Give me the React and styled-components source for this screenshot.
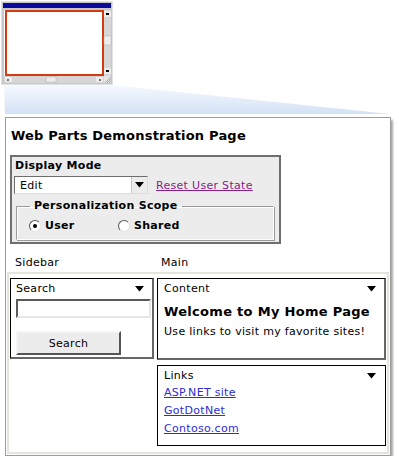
import React from "react";
import styled, { createGlobalStyle } from "styled-components";

const GlobalStyle = createGlobalStyle`
  html, body {
    margin: 0;
    padding: 0;
    background: #ffffff;
  }
  body {
    font-family: "DejaVu Sans", Verdana, sans-serif;
    font-size: 11px;
    letter-spacing: 0.3px;
    color: #000000;
  }
`;

function Illustration() {
  return (
    <svg width="399" height="114" viewBox="0 0 399 114">
      <defs>
        <linearGradient id="zoomFade" x1="0" y1="0" x2="0" y2="1">
          <stop offset="0" stopColor="#f6f9fe" />
          <stop offset="1" stopColor="#d3e1f5" />
        </linearGradient>
      </defs>
      <polygon points="4,85 112,85 390,114 5,114" fill="url(#zoomFade)" />
      {/* window frame */}
      <rect x="1" y="1" width="112" height="84" fill="#c8c8c8" />
      <rect x="1.5" y="1.5" width="111" height="83" fill="none" stroke="#e2e2e2" />
      <rect x="3" y="3" width="108" height="5" fill="#0a0a9c" />
      {/* client area */}
      <rect x="4" y="10" width="100" height="66" fill="#ffffff" />
      <rect x="6" y="11" width="97" height="64" fill="none" stroke="#d23a10" strokeWidth="2" />
      {/* vertical scrollbar */}
      <rect x="104" y="10" width="7" height="66" fill="#d6d6d6" />
      <rect x="104" y="11" width="7" height="6" fill="#ececec" />
      <rect x="106" y="13" width="3" height="2" fill="#000" />
      <rect x="104" y="36" width="7" height="9" fill="#ececec" stroke="#b0b0b0" strokeWidth="0.5" />
      <rect x="104" y="68" width="7" height="6" fill="#ececec" />
      <rect x="106" y="70" width="3" height="2" fill="#000" />
      {/* horizontal scrollbar */}
      <rect x="4" y="76" width="100" height="7" fill="#d6d6d6" />
      <rect x="5" y="77" width="7" height="5" fill="#ececec" />
      <rect x="7" y="79" width="2" height="2" fill="#777" />
      <rect x="46" y="77" width="10" height="5" fill="#ececec" stroke="#b0b0b0" strokeWidth="0.5" />
      <rect x="96" y="77" width="7" height="5" fill="#ececec" />
      <rect x="99" y="79" width="2" height="2" fill="#777" />
      {/* resize grip */}
      <rect x="104" y="76" width="7" height="7" fill="#e4e4e4" />
      <path d="M105 83 L111 77 M107 83 L111 79 M109 83 L111 81" stroke="#999" strokeWidth="0.8" />
    </svg>
  );
}

function Arrow() {
  return (
    <svg width="9" height="6" viewBox="0 0 9 6">
      <polygon points="0,0 9,0 4.5,5.5" fill="#000" />
    </svg>
  );
}

export default function App() {
  return (
    <>
      <GlobalStyle />
      <Illustration />
      <Panel>
        <PageTitle>Web Parts Demonstration Page</PageTitle>
        <ModeBox>
          <BoldLabel>Display Mode</BoldLabel>
          <ModeRow>
            <Select>
              <span>Edit</span>
              <SelectButton>
                <Arrow />
              </SelectButton>
            </Select>
            <ResetLink href="#">Reset User State</ResetLink>
          </ModeRow>
          <Scope>
            <Legend>Personalization Scope</Legend>
            <RadioRow>
              <RadioItem $width={89}>
                <Radio $checked />
                User
              </RadioItem>
              <RadioItem>
                <Radio />
                Shared
              </RadioItem>
            </RadioRow>
          </Scope>
        </ModeBox>

        <ZoneHeads>
          <ZoneHead>Sidebar</ZoneHead>
          <ZoneHead>Main</ZoneHead>
        </ZoneHeads>
        <Zones>
          <Column>
            <Part $height={81}>
              <PartTitle>
                Search
                <Arrow />
              </PartTitle>
              <TextBox />
              <Button>Search</Button>
            </Part>
          </Column>
          <Column>
            <Part $height={82} $wide>
              <PartTitle>
                Content
                <Arrow />
              </PartTitle>
              <Heading>Welcome to My Home Page</Heading>
              <Body>Use links to visit my favorite sites!</Body>
            </Part>
            <Part $height={81} $wide $thin>
              <PartTitle>
                Links
                <Arrow />
              </PartTitle>
              <LinkItem href="#">ASP.NET site</LinkItem>
              <LinkItem href="#">GotDotNet</LinkItem>
              <LinkItem href="#">Contoso.com</LinkItem>
            </Part>
          </Column>
        </Zones>
      </Panel>
    </>
  );
}

const Panel = styled.div`
  margin-left: 5px;
  width: 384px;
  height: 337px;
  border: 1px solid #9c9c9c;
  box-shadow: 2px 3px 2px rgba(0, 0, 0, 0.35);
  background: #ffffff;
  box-sizing: content-box;
  display: flex;
  flex-direction: column;
`;

const PageTitle = styled.div`
  padding: 10px 0 0 5px;
  font-size: 13px;
  line-height: 16px;
  font-weight: bold;
  letter-spacing: 0.2px;
`;

const ModeBox = styled.div`
  margin: 11px 0 0 4px;
  width: 265px;
  height: 84px;
  border: 2px solid #6e6e6e;
  background: #ececec;
  padding: 1px 0 0 2px;
  box-sizing: content-box;
  display: flex;
  flex-direction: column;
`;

const BoldLabel = styled.div`
  font-weight: bold;
  line-height: 14px;
  padding-left: 1px;
  margin-top: 1px;
`;

const ModeRow = styled.div`
  display: flex;
  align-items: center;
  gap: 8px;
  margin-top: 3px;
`;

const Select = styled.div`
  width: 134px;
  height: 18px;
  box-sizing: border-box;
  border: 1px solid;
  border-color: #6e6e6e #dcdcdc #dcdcdc #6e6e6e;
  background: #ffffff;
  display: flex;
  align-items: center;
  justify-content: space-between;
  padding-left: 5px;
`;

const SelectButton = styled.div`
  width: 15px;
  height: 16px;
  background: #ececec;
  border-left: 1px solid #c8c8c8;
  display: flex;
  align-items: center;
  justify-content: center;
`;

const ResetLink = styled.a`
  color: #8b1c8b;
  text-decoration: underline;
  margin-top: 1px;
`;

const Scope = styled.fieldset`
  flex: none;
  margin: 6px 5px 0 2px;
  padding: 2px 0 0 12px;
  height: 40px;
  box-sizing: border-box;
  border: 1px solid #9a9a9a;
  border-right-color: #ffffff;
  border-bottom-color: #ffffff;
  box-shadow: 1px 1px 0 #9a9a9a, inset 1px 1px 0 #ffffff;
`;

const Legend = styled.legend`
  font-weight: bold;
  padding: 0 4px;
  margin-left: 1px;
  line-height: 12px;
`;

const RadioRow = styled.div`
  display: flex;
  align-items: center;
  margin-top: 5px;
`;

const RadioItem = styled.label`
  display: flex;
  align-items: center;
  gap: 4px;
  font-weight: bold;
  width: ${(p) => (p.$width ? `${p.$width}px` : "auto")};
`;

const Radio = styled.span`
  width: 12px;
  height: 12px;
  box-sizing: border-box;
  border-radius: 50%;
  border: 1px solid;
  border-color: #555 #e4e4e4 #e4e4e4 #555;
  background: #ffffff;
  display: flex;
  align-items: center;
  justify-content: center;
  &::after {
    content: "";
    width: 4px;
    height: 4px;
    border-radius: 50%;
    background: #000;
    display: ${(p) => (p.$checked ? "block" : "none")};
  }
`;

const ZoneHeads = styled.div`
  display: grid;
  grid-template-columns: 146px 1fr;
  margin-top: 11px;
  padding-bottom: 1px;
`;

const ZoneHead = styled.div`
  padding-left: 9px;
  line-height: 16px;
`;

const Zones = styled.div`
  flex: 1;
  margin: 0 1px 1px 1px;
  border: 2px solid #e4e4da;
  display: grid;
  grid-template-columns: 146px 1fr;
  align-items: start;
  padding: 4px 1px 0 1px;
`;

const Column = styled.div`
  display: flex;
  flex-direction: column;
  gap: 5px;
  &:last-child {
    padding-left: 1px;
  }
`;

const Part = styled.div`
  height: ${(p) => p.$height}px;
  width: ${(p) => (p.$wide ? "229px" : "144px")};
  box-sizing: border-box;
  border: 1px solid #000;
  border-right: ${(p) => (p.$thin ? "1px solid #000" : "2px solid #666")};
  border-bottom: ${(p) => (p.$thin ? "1px solid #000" : "2px solid #666")};
  padding: 2px ${(p) => (p.$thin ? 9 : 8)}px 0 ${(p) => (p.$wide ? 6 : 5)}px;
  display: flex;
  flex-direction: column;
`;

const PartTitle = styled.div`
  display: flex;
  align-items: center;
  justify-content: space-between;
  line-height: 16px;
`;

const TextBox = styled.div`
  margin-top: 2px;
  width: 135px;
  height: 19px;
  box-sizing: border-box;
  border: 2px solid;
  border-color: #5a5a5a #e6e6e6 #e6e6e6 #5a5a5a;
  background: #ffffff;
`;

const Button = styled.div`
  margin-top: 13px;
  width: 105px;
  height: 24px;
  box-sizing: border-box;
  border: 2px solid;
  border-color: #f4f4f4 #555 #555 #f4f4f4;
  background: #ececec;
  display: flex;
  align-items: center;
  justify-content: center;
`;

const Heading = styled.div`
  margin-top: 7px;
  font-size: 13px;
  font-weight: bold;
  line-height: 16px;
`;

const Body = styled.div`
  margin-top: 5px;
  line-height: 14px;
`;

const LinkItem = styled.a`
  color: #2d2dd4;
  text-decoration: underline;
  line-height: 18px;
`;
